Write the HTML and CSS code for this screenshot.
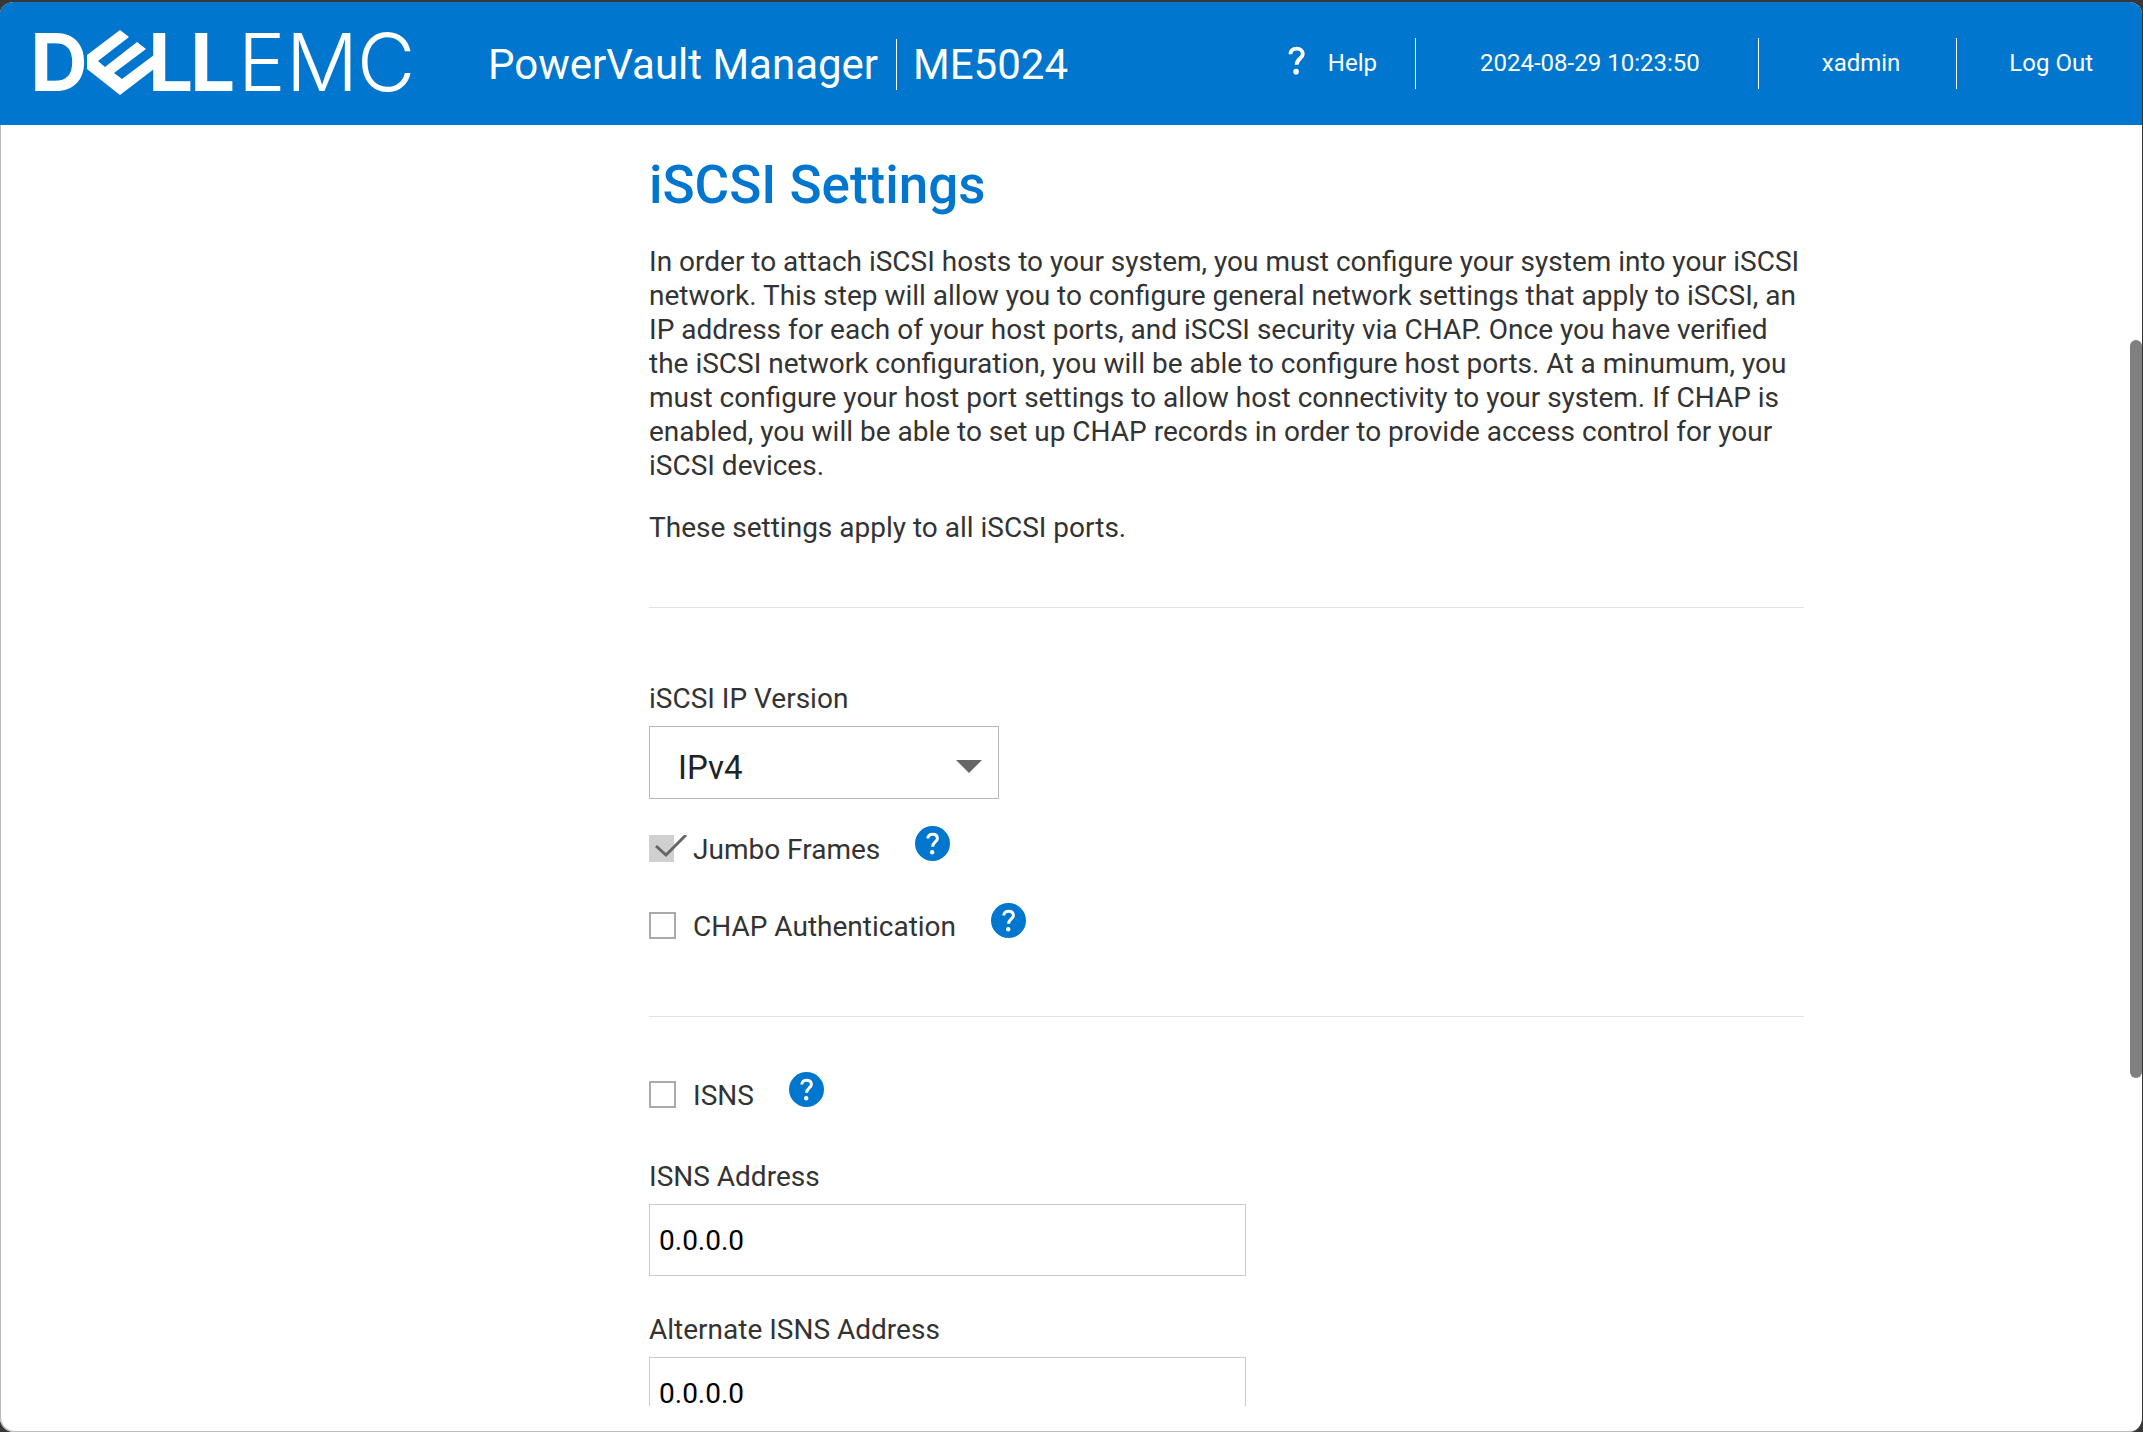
FILE: index.html
```
<!DOCTYPE html>
<html lang="en">
<head>
  <meta charset="UTF-8" />
  <meta name="viewport" content="width=device-width, initial-scale=1.0" />
  <title>PowerVault Manager - iSCSI Settings</title>
  <link rel="stylesheet" href="styles.css">
</head>
<body>
  <!-- Shared question mark -->
  <svg class="symbols" aria-hidden="true">
    <symbol id="question" viewBox="0 0 35 35">
      <path d="M12.8 12.6 C12.8 9.8 14.8 8.3 17.6 8.3 C20.5 8.3 22.4 9.9 22.4 12.4 C22.4 15.9 17.6 16.2 17.6 20.8" fill="none" stroke="#fff" stroke-width="3" />
      <circle cx="17.2" cy="26.2" r="2.2" fill="#fff" />
    </symbol>
  </svg>

  <div class="window">
    <header>
      <svg class="logo" viewBox="-1 1 376 68" role="img" aria-label="Dell EMC">
        <text class="logo-bold" x="-6" y="62">D</text>
        <path d="M51 26 L84 1 L93 8 L62 32 L69 38 L101 13 L110 20 L78 44 L86 50 L118 26 V40 L84 66 L51 40 Z" />
        <text class="logo-bold" x="112" y="62">L</text>
        <text class="logo-bold" x="154" y="62">L</text>
        <text class="logo-light" x="202" y="62">E</text>
        <text class="logo-light" x="250" y="62">M</text>
        <text class="logo-light" x="321" y="62">C</text>
      </svg>
      <div class="product">
        <span>PowerVault Manager</span>
        <span class="model">ME5024</span>
      </div>
      <nav>
        <a class="help-link" href="#"><svg class="question"><use href="#question" /></svg>Help</a>
        <span class="clock">2024-08-29 10:23:50</span>
        <a class="user" href="#">xadmin</a>
        <a class="logout" href="#">Log Out</a>
      </nav>
    </header>

    <main>
      <h1>iSCSI Settings</h1>
      <p>In order to attach iSCSI hosts to your system, you must configure your system into your iSCSI network. This step will allow you to configure general network settings that apply to iSCSI, an IP address for each of your host ports, and iSCSI security via CHAP. Once you have verified the iSCSI network configuration, you will be able to configure host ports. At a minumum, you must configure your host port settings to allow host connectivity to your system. If CHAP is enabled, you will be able to set up CHAP records in order to provide access control for your iSCSI devices.</p>
      <p>These settings apply to all iSCSI ports.</p>

      <form>
        <section class="general">
          <label class="field-label" for="ipVersion">iSCSI IP Version</label>
          <div class="select-box">
            <select id="ipVersion">
              <option>IPv4</option>
              <option>IPv6</option>
            </select>
            <svg class="arrow" viewBox="0 0 26 13"><path d="M0 0 H26 L13 13 Z" /></svg>
          </div>
          <div class="check-row">
            <label>
              <span class="check-box">
                <input type="checkbox" id="jumbo" checked disabled />
                <svg class="tick" viewBox="0 0 38 27"><path d="M7 11 L17 20 L37 0" /></svg>
              </span>
              Jumbo Frames
            </label>
            <button type="button" class="help" aria-label="Help on Jumbo Frames"><svg><use href="#question" /></svg></button>
          </div>
          <div class="check-row">
            <label>
              <span class="check-box"><input type="checkbox" id="chap" /></span>
              CHAP Authentication
            </label>
            <button type="button" class="help" aria-label="Help on CHAP Authentication"><svg><use href="#question" /></svg></button>
          </div>
        </section>

        <section class="isns">
          <div class="check-row">
            <label>
              <span class="check-box"><input type="checkbox" id="isns" /></span>
              ISNS
            </label>
            <button type="button" class="help" aria-label="Help on ISNS"><svg><use href="#question" /></svg></button>
          </div>
          <label class="field-label" for="isnsAddress">ISNS Address</label>
          <input type="text" id="isnsAddress" value="0.0.0.0" />
          <label class="field-label" for="isnsAlternate">Alternate ISNS Address</label>
          <input type="text" id="isnsAlternate" value="0.0.0.0" />
        </section>
      </form>
    </main>
    <div class="scroll-thumb"></div>
  </div>
</body>
</html>
```
FILE: styles.css
```
* {
  box-sizing: border-box;
  margin: 0;
  padding: 0;
}

body {
  background: #383838;
  color: #333;
  font-family: Roboto, "Liberation Sans", sans-serif;
  font-size: 28px;
  line-height: 34px;
}

.symbols {
  display: none;
}

.window {
  position: relative;
  display: flex;
  flex-direction: column;
  height: 100vh;
  border-top: 2px solid #383838;
  border-right: 1px solid #333;
  border-radius: 14px;
  background: #fff;
  overflow: hidden;
  box-shadow: inset 1px -1px 0 #bbb;
}

/* Header */
header {
  display: flex;
  flex-shrink: 0;
  align-items: center;
  height: 123px;
  padding: 0 49px 0 35px;
  background: #0076ce;
  color: #fff;
}

.logo {
  width: 376px;
  height: 68px;
  fill: #fff;
  overflow: visible;
}

.logo-bold {
  font: 700 80px Inter, sans-serif;
}

.logo-light {
  font: 300 80px Inter, sans-serif;
}

.product {
  display: flex;
  align-items: center;
  margin-left: 77px;
  padding-top: 2px;
  font-size: 42px;
  line-height: 51px;
  white-space: nowrap;
}

.model {
  margin-left: 18px;
  padding-left: 16px;
  border-left: 1px solid #fff;
}

nav {
  display: flex;
  align-items: center;
  margin-left: auto;
  font-size: 24px;
  line-height: 51px;
  white-space: nowrap;
}

nav a {
  color: #fff;
  text-decoration: none;
}

.help-link {
  display: flex;
  padding-right: 38px;
}

.question {
  width: 45px;
  height: 45px;
  margin-right: 9px;
}

.clock {
  padding: 0 58px 0 64px;
  border-left: 1px solid #fff;
}

.user {
  padding: 0 56px 0 63px;
  border-left: 1px solid #fff;
}

.logout {
  padding-left: 52px;
  border-left: 1px solid #fff;
}

/* Settings */
main {
  flex: 1;
  min-height: 0;
  margin-bottom: 26px;
  padding: 28px 15.8% 0 30.3%;
  overflow: hidden;
}

h1 {
  margin-bottom: 28px;
  color: #0076ce;
  font-size: 53px;
  font-weight: 500;
  line-height: 64px;
}

p {
  margin-bottom: 28px;
}

section {
  border-top: 1px solid #e4e4e4;
}

.general {
  margin-top: 62px;
  padding: 74px 0 72px;
}

.isns {
  padding-top: 55px;
}

.field-label {
  display: block;
  margin-bottom: 10px;
}

.select-box {
  position: relative;
  width: 350px;
  margin-bottom: 27px;
}

select {
  display: block;
  width: 100%;
  height: 73px;
  padding: 10px 28px 0;
  border: 1px solid #b8b8b8;
  border-radius: 0;
  background: #fff;
  color: #222;
  font: 33px Roboto, sans-serif;
  appearance: none;
}

.arrow {
  position: absolute;
  top: 34px;
  right: 17px;
  width: 26px;
  height: 13px;
  fill: #666;
  pointer-events: none;
}

.check-row {
  display: flex;
  align-items: flex-start;
  gap: 35px;
  margin-bottom: 36px;
}

.check-row:last-child {
  margin-bottom: 0;
}

.check-row label {
  display: flex;
  align-items: center;
  gap: 17px;
  padding-top: 7px;
}

.check-box {
  position: relative;
  width: 27px;
  height: 27px;
  margin-bottom: 4px;
}

input[type="checkbox"] {
  display: block;
  width: 27px;
  height: 27px;
  border: 2px solid #aaa;
  background: #fff;
  appearance: none;
}

input[type="checkbox"]:disabled {
  width: 25px;
  border: none;
  background: #d0d0d0;
}

.tick {
  position: absolute;
  top: 0;
  left: 0;
  width: 38px;
  height: 27px;
  fill: none;
  stroke: #666;
  stroke-width: 3;
}

.help {
  width: 35px;
  height: 35px;
  border: none;
  border-radius: 50%;
  background: #0076ce;
  cursor: pointer;
}

.help svg {
  display: block;
  width: 35px;
  height: 35px;
}

.isns .check-row {
  margin-bottom: 47px;
}

input[type="text"] {
  display: block;
  width: 597px;
  max-width: 100%;
  height: 72px;
  margin-bottom: 37px;
  padding: 0 9px;
  border: 1px solid #ccc;
  background: #fff;
  color: #000;
  font: 28px Roboto, sans-serif;
}

.scroll-thumb {
  position: absolute;
  top: 338px;
  right: 0;
  width: 12px;
  height: 738px;
  border-radius: 6px;
  background: #808080;
}
```
